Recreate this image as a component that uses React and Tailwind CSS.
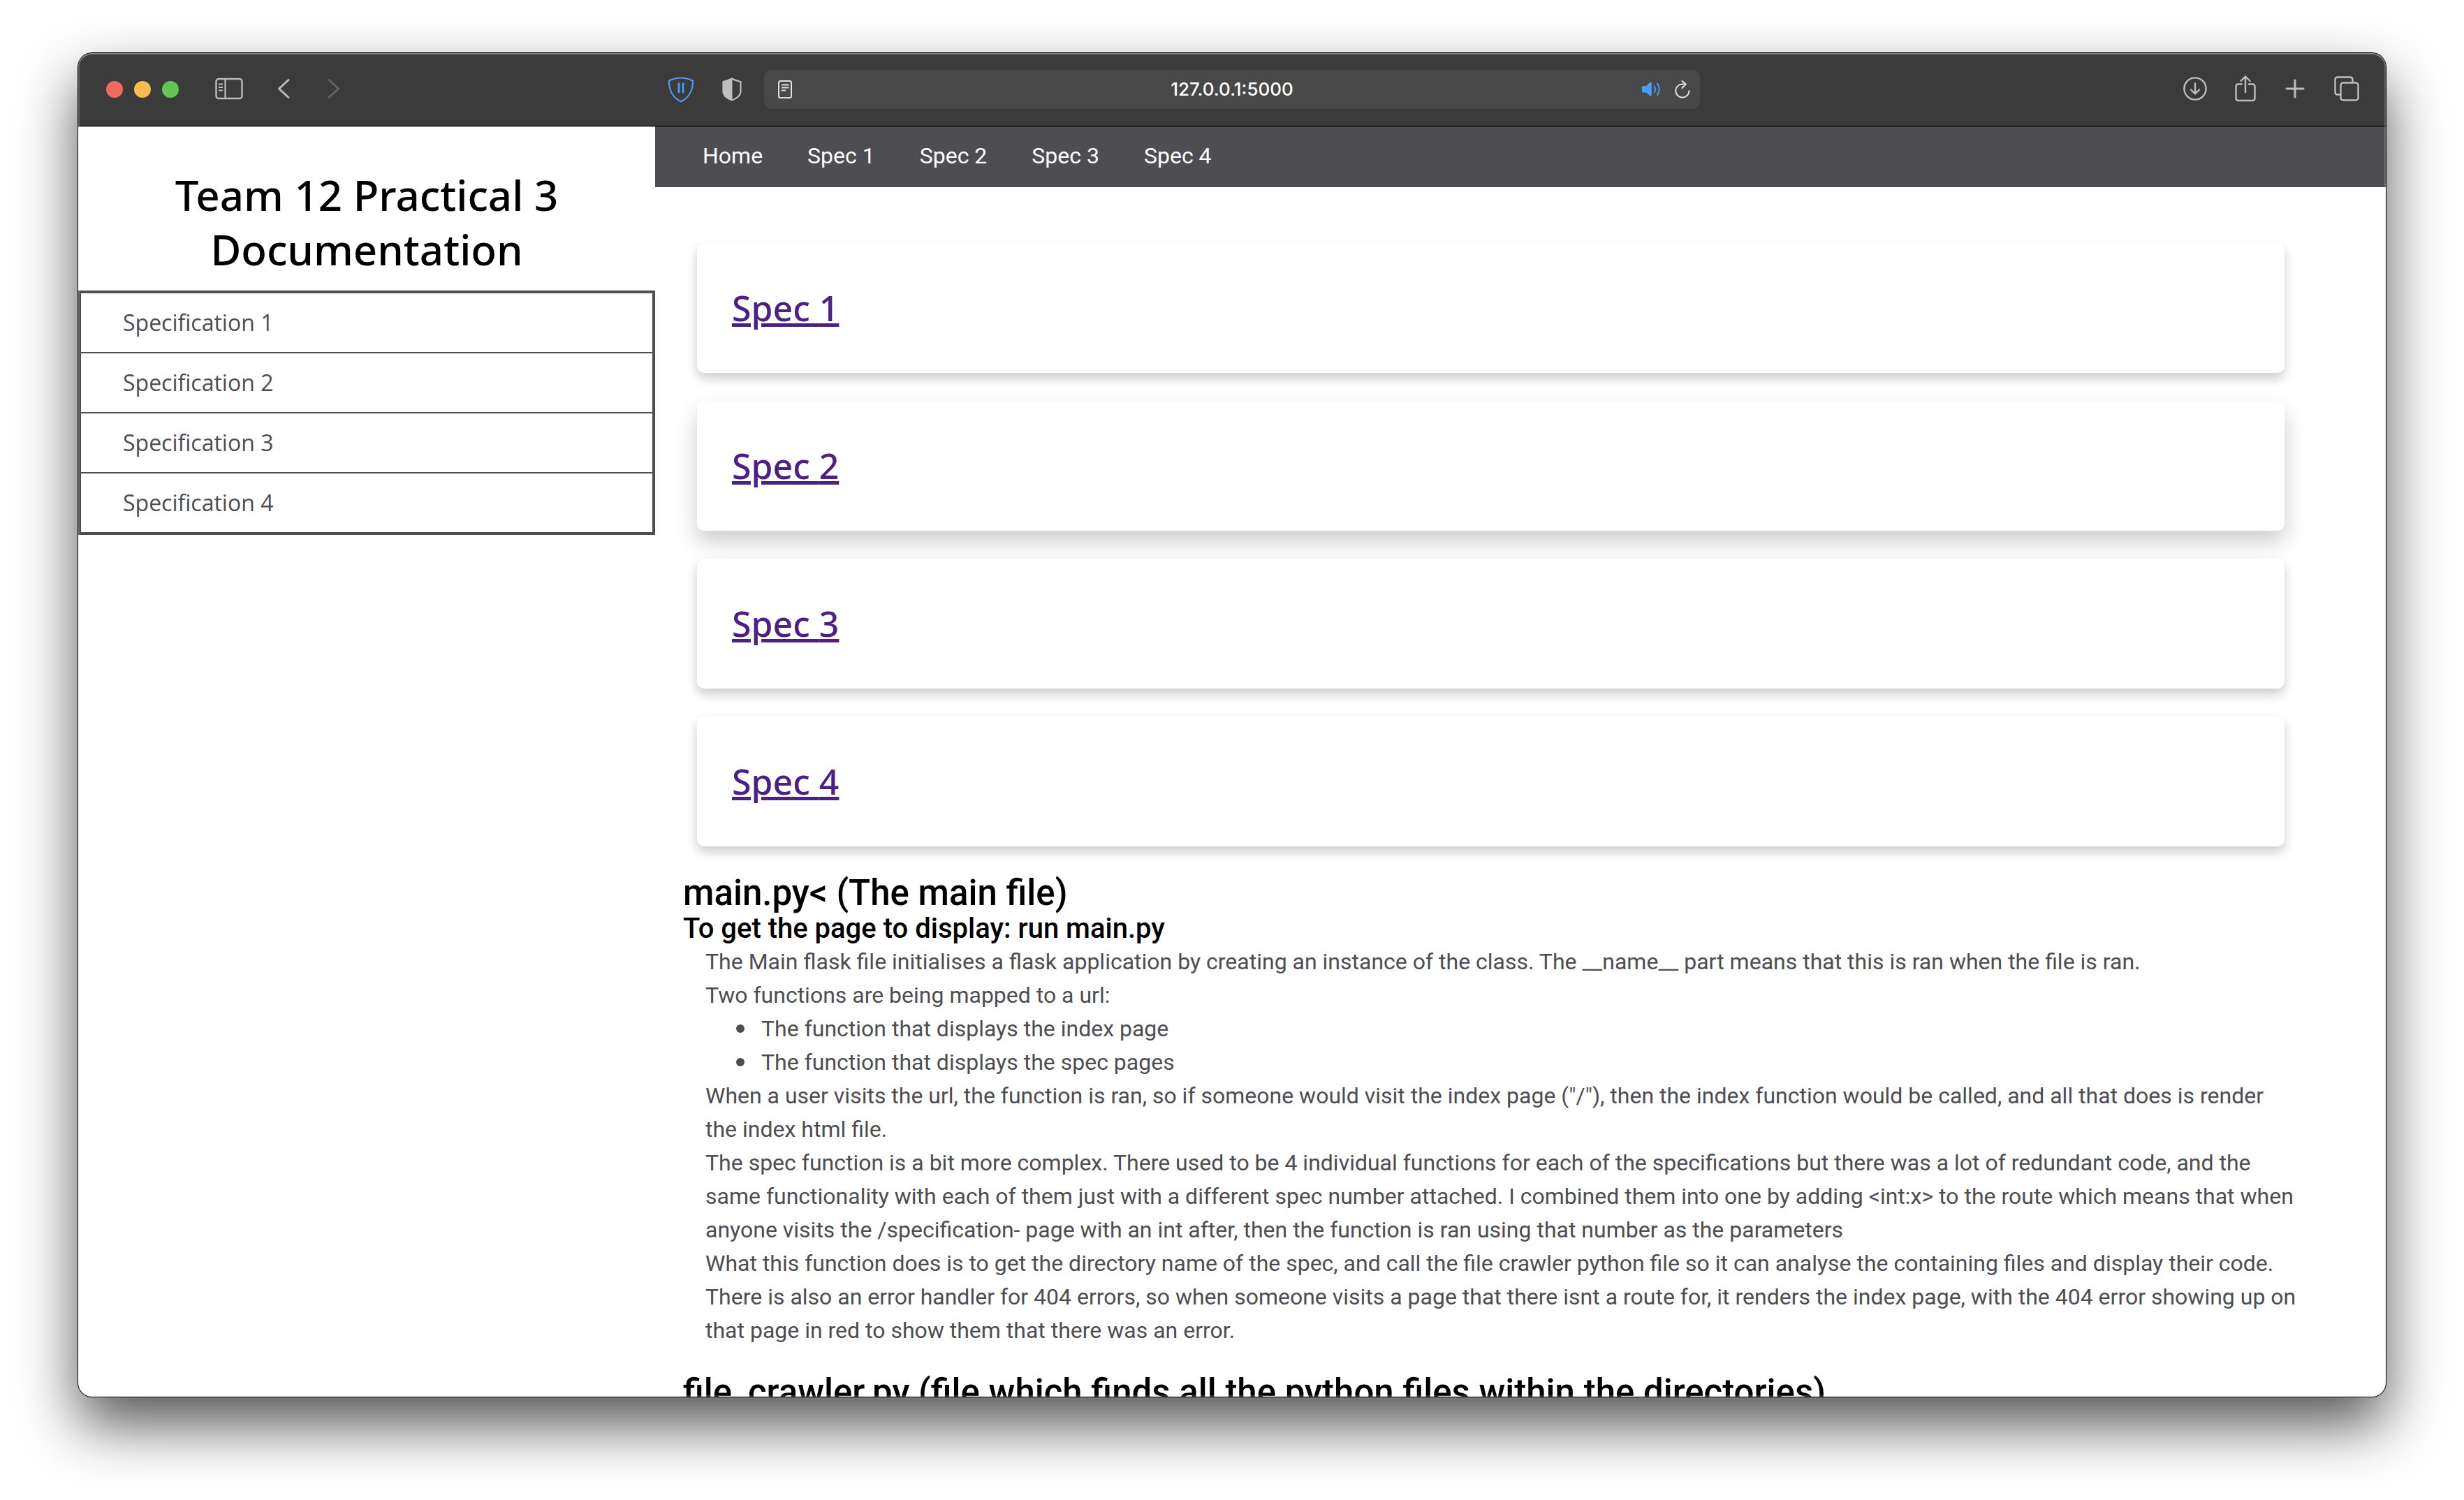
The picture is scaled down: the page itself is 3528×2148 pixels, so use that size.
import React from "react";

const SPECS = [1, 2, 3, 4];

function IconButton({ label, className = "", children }) {
  return (
    <button type="button" aria-label={label} className={"flex shrink-0 items-center justify-center " + className}>
      {children}
    </button>
  );
}

function SidebarIcon() {
  return (
    <svg width="40" height="32" viewBox="0 0 40 32" fill="none" stroke="#bdbdbd">
      <rect x="1.5" y="2" width="37" height="28" rx="3.5" strokeWidth="2.4" />
      <path d="M14.5 2v28" strokeWidth="2.2" />
      <path d="M5 9.5h6M5 14h6M5 18.5h6" strokeWidth="1.8" />
    </svg>
  );
}

function Chevron({ flip }) {
  return (
    <svg width="20" height="32" viewBox="0 0 20 32" fill="none" stroke={flip ? "#626262" : "#bdbdbd"} strokeWidth="3" strokeLinecap="round" strokeLinejoin="round">
      <path d={flip ? "M3 3.5L16.5 16L3 28.5" : "M17 3.5L3.5 16L17 28.5"} />
    </svg>
  );
}

function BlueShield() {
  return (
    <svg width="38" height="38" viewBox="0 0 38 38" fill="none" stroke="#4a9cf5">
      <path d="M2 6.5Q19 -1.5 36 6.5C36.5 20 30.5 31 19 36.5C7.5 31 1.5 20 2 6.5Z" strokeWidth="2.2" strokeLinejoin="round" />
      <path d="M16 11v12M22 11v12" strokeWidth="2.8" strokeLinecap="round" />
    </svg>
  );
}

function HalfShield() {
  return (
    <svg width="28" height="34" viewBox="0 0 28 34">
      <path d="M14 1.5C18.5 4 22.5 5.3 26.5 6V20C26.5 26 20 30.5 14 32.5C8 30.5 1.5 26 1.5 20V6C5.5 5.3 9.5 4 14 1.5Z" fill="none" stroke="#bdbdbd" strokeWidth="2.2" strokeLinejoin="round" />
      <path d="M14.5 1.5V32.5C8 30.5 1.5 26 1.5 20V6C5.5 5.3 9.5 4 14.5 1.5Z" fill="#bdbdbd" />
    </svg>
  );
}

function ReaderIcon() {
  return (
    <svg width="20" height="26" viewBox="0 0 20 26" fill="none" stroke="#dedede">
      <rect x="1" y="1" width="18" height="24" rx="2.5" strokeWidth="2" />
      <path d="M5 6.5h10.5M5 10.5h10.5M5 14.5h6" strokeWidth="1.8" />
    </svg>
  );
}

function SpeakerIcon() {
  return (
    <svg width="28" height="24" viewBox="0 0 28 24">
      <path d="M1 9Q1 7 3 7H7L12.5 2.3Q14.8 1 14.8 3V20.5Q14.8 22.6 12.5 21.2L7 16.5H3Q1 16.5 1 14.5Z" fill="#4a9cf5" />
      <path d="M18.8 7.5Q21.8 11.8 18.8 16M23 3.5Q28.5 11.8 23 20" fill="none" stroke="#4a9cf5" strokeWidth="1.9" strokeLinecap="round" />
    </svg>
  );
}

function ReloadIcon() {
  return (
    <svg width="22" height="26" viewBox="0 0 22 26" fill="none" stroke="#dedede" strokeWidth="2" strokeLinecap="round" strokeLinejoin="round">
      <path d="M20.5 15A9.6 9.6 0 1 1 11 5.4H15" />
      <path d="M10.5 1L15.8 5.6L10.5 11" />
    </svg>
  );
}

function DownloadIcon() {
  return (
    <svg width="34" height="34" viewBox="0 0 34 34" fill="none" stroke="#bdbdbd" strokeWidth="2.4" strokeLinecap="round" strokeLinejoin="round">
      <circle cx="17" cy="17" r="15.6" />
      <path d="M17 9.5V24M11 18.5L17 24.4L23 18.5" />
    </svg>
  );
}

function ShareIcon() {
  return (
    <svg width="30" height="38" viewBox="0 0 30 38" fill="none" stroke="#bdbdbd" strokeWidth="2.4" strokeLinecap="round" strokeLinejoin="round">
      <path d="M10 12.5H5Q1.5 12.5 1.500 16V32.5Q1.5 36 5 36H25Q28.5 36 28.500 32.5V16Q28.5 12.5 25 12.5H20" />
      <path d="M15 24V2M8.5 8L15 1.5L21.5 8" />
    </svg>
  );
}

function PlusIcon() {
  return (
    <svg width="28" height="28" viewBox="0 0 28 28" fill="none" stroke="#bdbdbd" strokeWidth="3" strokeLinecap="round">
      <path d="M14 2v24M2 14h24" />
    </svg>
  );
}

function TabsIcon() {
  return (
    <svg width="36" height="36" viewBox="0 0 36 36" fill="none" stroke="#bdbdbd" strokeWidth="2.4" strokeLinejoin="round">
      <rect x="9.5" y="9.5" width="25" height="25" rx="3.5" />
      <path d="M9.5 26.5H5Q1.5 26.5 1.5 23V5Q1.5 1.5 5 1.5H23Q26.5 1.5 26.5 5V9.5" />
    </svg>
  );
}

function Toolbar() {
  return (
    <header className="relative grid h-[105px] shrink-0 grid-cols-[1fr_minmax(0,1340px)_1fr] items-center border-b border-black bg-[#3b3b3b] shadow-[0_1px_0_rgba(0,0,0,0.25)]">
      <div className="flex items-center justify-between pr-8 pl-10">
        <div className="flex items-center">
          <div className="flex gap-4">
            <button type="button" aria-label="Close" className="size-6 rounded-full bg-[#ee6a5f]" />
            <button type="button" aria-label="Minimise" className="size-6 rounded-full bg-[#f5bd4f]" />
            <button type="button" aria-label="Full screen" className="size-6 rounded-full bg-[#62c554]" />
          </div>
          <div className="flex items-center pb-0.5 pl-13">
            <IconButton label="Show sidebar"><SidebarIcon /></IconButton>
            <IconButton label="Back" className="ml-12"><Chevron /></IconButton>
            <IconButton label="Forward" className="ml-13"><Chevron flip /></IconButton>
          </div>
        </div>
        <div className="flex items-center gap-10">
          <IconButton label="Content blocker"><BlueShield /></IconButton>
          <IconButton label="Privacy report"><HalfShield /></IconButton>
        </div>
      </div>
      <div className="flex h-14 items-center rounded-xl bg-[#484848] pr-3.5 pl-5">
        <IconButton label="Reader" className="mr-11"><ReaderIcon /></IconButton>
        <input
          aria-label="Address"
          defaultValue="127.0.0.1:5000"
          className="min-w-0 flex-1 bg-transparent text-center font-['Inter','Liberation_Sans',sans-serif] text-[26px] leading-8 font-medium text-white outline-none"
        />
        <IconButton label="Mute tab"><SpeakerIcon /></IconButton>
        <IconButton label="Reload" className="ml-5"><ReloadIcon /></IconButton>
      </div>
      <div className="flex items-center justify-end pr-[38px] pb-0.5">
        <IconButton label="Downloads"><DownloadIcon /></IconButton>
        <IconButton label="Share" className="ml-10"><ShareIcon /></IconButton>
        <IconButton label="New tab" className="ml-[42px]"><PlusIcon /></IconButton>
        <IconButton label="Tab overview" className="ml-[42px]"><TabsIcon /></IconButton>
      </div>
    </header>
  );
}

function Sidebar() {
  return (
    <aside className="w-1/4 shrink-0 pt-[59px]">
      <h1 className="px-10 pb-5 text-center font-['Noto_Sans','Open_Sans',sans-serif] text-[60px] leading-[78px] font-medium text-black">
        Team 12 Practical 3 Documentation
      </h1>
      <ul className="divide-y-2 divide-[#4d4d52] border-4 border-[#4d4d52] font-['Open_Sans','Noto_Sans',sans-serif]">
        {SPECS.map((n) => (
          <li key={n}>
            <a href={"#spec-" + n} className="block px-[60px] py-[18px] text-[32px] leading-[48px] text-[#4d4d52]">
              Specification {n}
            </a>
          </li>
        ))}
      </ul>
    </aside>
  );
}

function NavBar() {
  return (
    <nav className="flex h-[87px] items-start bg-[#4d4d52] px-9 pt-[18px] text-[32px] leading-[48px] text-white">
      <a href="#home" className="px-8">Home</a>
      {SPECS.map((n) => (
        <a key={n} href={"#spec-" + n} className="px-8">Spec {n}</a>
      ))}
    </nav>
  );
}

function SpecCard({ n, raised }) {
  return (
    <section
      className={
        "flex h-[186px] items-center rounded-[10px] bg-white px-[50px] " +
        (raised ? "shadow-[0_16px_32px_rgba(0,0,0,0.2)]" : "shadow-[0_8px_16px_rgba(0,0,0,0.2)]")
      }
    >
      <h2 className="font-['Noto_Sans','Open_Sans',sans-serif] text-[50px] leading-16 font-medium">
        <a href={"#spec-" + n} className="text-[#4c2085] underline">Spec {n}</a>
      </h2>
    </section>
  );
}

function BulletItem({ children }) {
  return (
    <li className="flex items-center gap-6">
      <span className="size-3 rounded-full bg-current" />
      {children}
    </li>
  );
}

function Documentation() {
  return (
    <main className="pt-20 pr-[125px] pl-10">
      <div className="flex flex-col gap-10 px-5">
        {SPECS.map((n) => (
          <SpecCard key={n} n={n} raised={n === 2} />
        ))}
      </div>
      <h2 className="pt-10 text-[51px] leading-[54px] font-medium text-black">main.py&lt; (The main file)</h2>
      <h3 className="text-[40px] leading-[47px] font-medium text-black">To get the page to display: run main.py</h3>
      <div className="pl-8 text-[32px] leading-[48px] text-[#4d4d52]">
        <p>The Main flask file initialises a flask application by creating an instance of the class. The __name__ part means that this is ran when the file is ran.</p>
        <p>Two functions are being mapped to a url:</p>
        <ul className="pl-11">
          <BulletItem>The function that displays the index page</BulletItem>
          <BulletItem>The function that displays the spec pages</BulletItem>
        </ul>
        <p>When a user visits the url, the function is ran, so if someone would visit the index page ("/"), then the index function would be called, and all that does is render the index html file.</p>
        <p>The spec function is a bit more complex. There used to be 4 individual functions for each of the specifications but there was a lot of redundant code, and the same functionality with each of them just with a different spec number attached. I combined them into one by adding &lt;int:x&gt; to the route which means that when anyone visits the /specification- page with an int after, then the function is ran using that number as the parameters</p>
        <p>What this function does is to get the directory name of the spec, and call the file crawler python file so it can analyse the containing files and display their code. There is also an error handler for 404 errors, so when someone visits a page that there isnt a route for, it renders the index page, with the 404 error showing up on that page in red to show them that there was an error.</p>
      </div>
      <h2 className="pt-[38px] text-[51px] leading-[54px] font-medium text-black">
        file_crawler.py (file which finds all the python files within the directories)
      </h2>
    </main>
  );
}

export default function App() {
  return (
    <div className="flex h-screen flex-col bg-white px-28 pt-19 pb-37 font-['Roboto','Liberation_Sans',sans-serif]">
      <div className="relative flex min-h-0 flex-1 flex-col overflow-hidden rounded-[20px] bg-white shadow-[0_0_0_1px_#000,0_40px_84px_rgba(0,0,0,0.67)]">
        <Toolbar />
        <div className="flex min-h-0 flex-1 overflow-hidden">
          <Sidebar />
          <div className="min-w-0 flex-1">
            <NavBar />
            <Documentation />
          </div>
        </div>
        <div className="pointer-events-none absolute inset-0 rounded-[20px] shadow-[inset_0_0_0_2px_rgba(255,255,255,0.2),inset_0_2px_0_rgba(255,255,255,0.2)]" />
      </div>
    </div>
  );
}
